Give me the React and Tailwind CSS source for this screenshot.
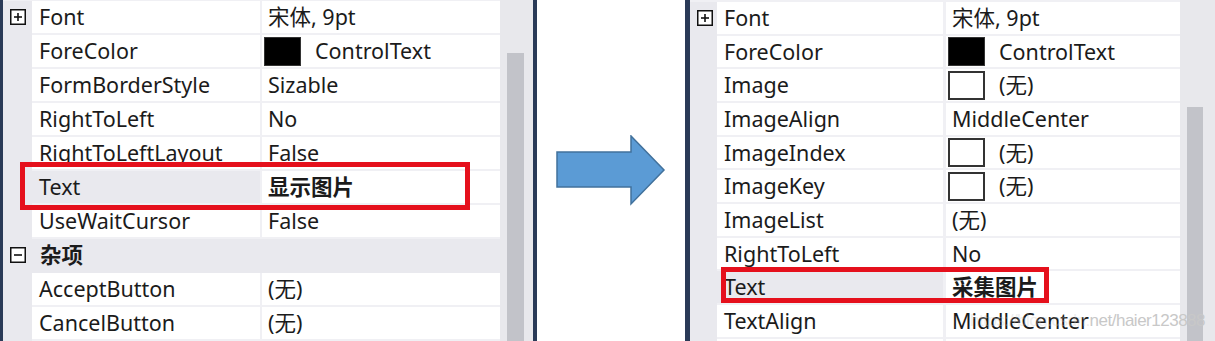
import React from "react";

const GUT = "bg-[#e9e9ee]";
const SEP = "bg-[#f0f0f4]";

function BoxIcon({ minus }) {
  return (
    <svg width="16" height="16" viewBox="0 0 16 16">
      <rect x="0.75" y="0.75" width="14.5" height="14.5" fill="#fff" stroke="#111" strokeWidth="1.5" />
      <line x1="4" y1="8" x2="12" y2="8" stroke="#111" strokeWidth="1.6" />
      {!minus && <line x1="8" y1="4" x2="8" y2="12" stroke="#111" strokeWidth="1.6" />}
    </svg>
  );
}

function Value({ r }) {
  if (r.swatch) {
    return (
      <div className="flex items-center h-full pl-[2px]">
        <div
          className={
            r.swatch === "black"
              ? "w-[37px] h-[29px] bg-black border border-[#333]"
              : "w-[37px] h-[29px] bg-white border-2 border-[#333]"
          }
        />
        <span className="ml-[14px]">{r.value}</span>
      </div>
    );
  }
  return (
    <div className={"flex items-center h-full pl-[6px] " + (r.bold ? "font-bold" : "")}>{r.value}</div>
  );
}

function Panel({ rows, c }) {
  return (
    <div className="relative flex h-[341px] overflow-hidden">
      <div className={"bg-[#2a3a57] shrink-0 " + c.leftBorder} />
      <div className={"flex flex-col shrink-0 " + SEP + " " + c.topPad}>
        {rows.map((r, i) =>
          r.cat ? (
            <div key={i} className={"flex shrink-0 " + GUT + " " + c.row}>
              <div className={"flex items-center pl-[7px] " + c.gut + " " + c.cell}>
                <BoxIcon minus />
              </div>
              <div className={"flex items-center pl-[8px] font-bold " + c.cell}>{r.cat}</div>
            </div>
          ) : (
            <div key={i} className={"flex shrink-0 " + c.row}>
              <div className={"flex items-start h-full " + GUT + " " + c.gut}>
                <div className={"flex items-center pl-[7px] " + c.cell}>{r.icon && <BoxIcon />}</div>
              </div>
              <div className={"flex " + c.cell + " " + c.gap}>
                <div className={"flex items-center pl-[7px] " + (r.selected ? GUT : "bg-white") + " " + c.name}>
                  {r.name}
                </div>
                <div className={"bg-white " + c.value}>
                  <Value r={r} />
                </div>
              </div>
            </div>
          )
        )}
      </div>
      <div className={"bg-[#e8e8ec] h-full shrink-0 " + c.track}>
        <div className={"bg-[#c2c3c9] ml-[7px] h-[400px] " + c.thumb} />
      </div>
      {c.rightBorder && <div className={"bg-[#2a3a57] shrink-0 " + c.rightBorder} />}
      <div className={"absolute border-[5px] border-[#e5101c] " + c.box} />
    </div>
  );
}

const leftCfg = {
  row: "h-[34px]",
  cell: "h-[32px]",
  gut: "w-[29px]",
  name: "w-[228px]",
  gap: "gap-x-[2px]",
  value: "w-[238px]",
  track: "w-[33px]",
  thumb: "mt-[53px] w-[17px]",
  leftBorder: "w-[3px]",
  rightBorder: "w-[4px]",
  topPad: "pt-[1px]",
  box: "left-[20px] top-[162px] w-[450px] h-[48px]",
};

const rightCfg = {
  row: "h-[33.67px]",
  cell: "h-[31.67px]",
  gut: "w-[27px]",
  name: "w-[226px]",
  gap: "gap-x-[3px]",
  value: "w-[234px]",
  track: "w-[35px]",
  thumb: "mt-[107px] w-[16px]",
  leftBorder: "w-[5px]",
  rightBorder: "",
  topPad: "pt-[2px]",
  box: "left-[36px] top-[267px] w-[328px] h-[36px]",
};

const leftRows = [
  { name: "Font", value: "宋体, 9pt", icon: true },
  { name: "ForeColor", value: "ControlText", swatch: "black" },
  { name: "FormBorderStyle", value: "Sizable" },
  { name: "RightToLeft", value: "No" },
  { name: "RightToLeftLayout", value: "False" },
  { name: "Text", value: "显示图片", bold: true, selected: true },
  { name: "UseWaitCursor", value: "False" },
  { cat: "杂项" },
  { name: "AcceptButton", value: "(无)" },
  { name: "CancelButton", value: "(无)" },
  { name: "", value: "" },
];

const rightRows = [
  { name: "Font", value: "宋体, 9pt", icon: true },
  { name: "ForeColor", value: "ControlText", swatch: "black" },
  { name: "Image", value: "(无)", swatch: "white" },
  { name: "ImageAlign", value: "MiddleCenter" },
  { name: "ImageIndex", value: "(无)", swatch: "white" },
  { name: "ImageKey", value: "(无)", swatch: "white" },
  { name: "ImageList", value: "(无)" },
  { name: "RightToLeft", value: "No" },
  { name: "Text", value: "采集图片", bold: true, selected: true },
  { name: "TextAlign", value: "MiddleCenter" },
  { name: "", value: "" },
];

export default function App() {
  return (
    <div className="relative w-[1215px] h-[341px] bg-white overflow-hidden flex font-['Noto_Sans','Noto_Sans_CJK_SC',sans-serif] text-[21.5px] text-[#1b1b1b] leading-none">
      <div className="w-[537px] shrink-0">
        <Panel rows={leftRows} c={leftCfg} />
      </div>
      <div className="w-[148px] shrink-0 flex items-center justify-center">
        <svg width="110" height="71" viewBox="0 0 110 71">
          <polygon
            points="1,17 75,17 75,1 108,35 75,69 75,52 1,52"
            fill="#5b9bd5"
            stroke="#41719c"
            strokeWidth="1.5"
          />
        </svg>
      </div>
      <div className="w-[530px] shrink-0">
        <Panel rows={rightRows} c={rightCfg} />
      </div>
      <div className="absolute right-[10px] top-[312px] font-['Liberation_Sans',sans-serif] text-[17px] tracking-[-0.5px] text-[#c8c8c8]">
        <span className="opacity-30">https://blog.csdn.</span>net/haier123888
      </div>
    </div>
  );
}
